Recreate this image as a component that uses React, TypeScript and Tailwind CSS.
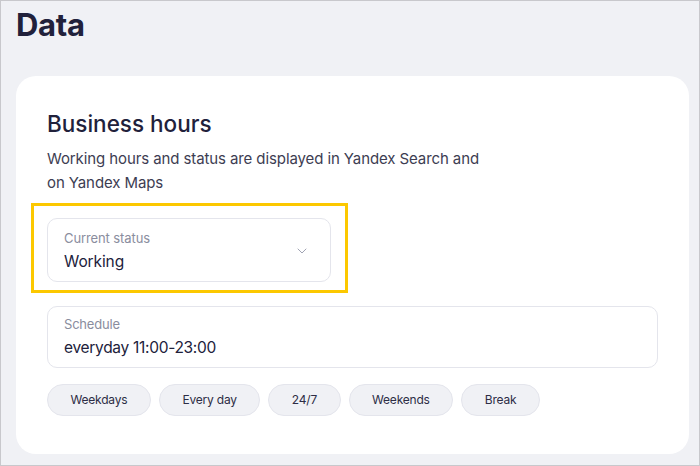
import { ChevronDown } from 'lucide-react';

const presets = ['Weekdays', 'Every day', '24/7', 'Weekends', 'Break'];

export default function App() {
  return (
    <div
      className="w-[700px] h-[466px] overflow-hidden border border-[#c8c8cc] bg-[#f0f1f5] pl-[15px] pr-[10px] pt-[5px] text-[#21213b]"
      style={{ fontFamily: 'Inter, "Open Sans", sans-serif' }}
    >
      <h1 className="text-[31px] leading-[38px] font-bold tracking-[-0.3px]">Data</h1>

      <div className="mt-[32px] rounded-[20px] bg-white px-[31px] pt-[34px] pb-[38px]">
        <h2 className="text-[22.5px] leading-[28px] font-medium">Business hours</h2>
        <p className="mt-[9px] max-w-[450px] text-[15px] leading-[24px] tracking-[-0.1px] text-[#3d3d52]">
          Working hours and status are displayed in Yandex Search and on Yandex Maps
        </p>

        {/* highlighted select */}
        <div className="mt-[8px] -mx-[16px] w-[317px] border-[3px] border-[#fcc800] px-[13px] pt-[12px] pb-[8px]">
          <button className="flex h-[64px] w-[284px] items-center justify-between rounded-[10px] border border-[#e4e5ec] bg-white pl-[16px] pr-[20px] pt-[2px] text-left">
            <div>
              <div className="text-[13px] leading-[16px] tracking-[-0.1px] text-[#8a8d9e]">Current status</div>
              <div className="mt-[6px] text-[15.5px] leading-[20px] tracking-[-0.1px]">Working</div>
            </div>
            <ChevronDown className="h-[16px] w-[16px] text-[#a0a3b3]" strokeWidth={1.5} />
          </button>
        </div>

        <div className="mt-[13px] h-[62px] rounded-[10px] border border-[#e4e5ec] px-[16px] pt-[9px]">
          <div className="text-[13px] leading-[16px] tracking-[-0.2px] text-[#8a8d9e]">Schedule</div>
          <div className="mt-[6px] text-[15.5px] leading-[20px] tracking-[-0.3px]">everyday 11:00-23:00</div>
        </div>

        <div className="mt-[16px] flex gap-[8px]">
          {presets.map(p => (
            <button
              key={p}
              className="h-[32px] rounded-full border border-[#e4e5ec] bg-[#f0f1f5] px-[22.5px] text-[12px] tracking-[-0.2px] text-[#2d2d45]"
            >
              {p}
            </button>
          ))}
        </div>
      </div>
    </div>
  );
}
